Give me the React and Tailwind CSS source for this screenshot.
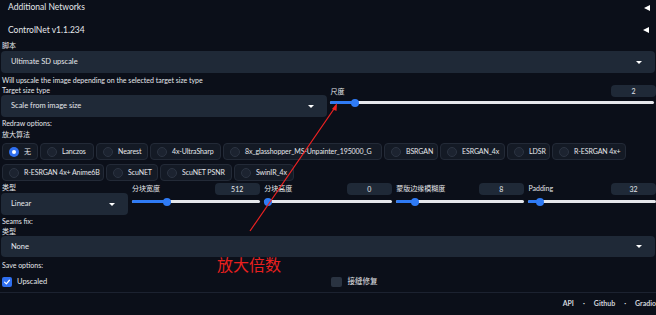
import React from "react";

const row1 = [
    { label: "无", w: "w-[36px]", checked: true },
    { label: "Lanczos", w: "w-[54px]" },
    { label: "Nearest", w: "w-[52px]" },
    { label: "4x-UltraSharp", w: "w-[71px]" },
    { label: "8x_glasshopper_MS-Unpainter_195000_G", w: "w-[159px]" },
    { label: "BSRGAN", w: "w-[54px]" },
    { label: "ESRGAN_4x", w: "w-[65px]" },
    { label: "LDSR", w: "w-[43px]" },
    { label: "R-ESRGAN 4x+", w: "w-[74px]" },
];

const row2 = [
    { label: "R-ESRGAN 4x+ Anime6B", w: "w-[102px]" },
    { label: "ScuNET", w: "w-[52px]" },
    { label: "ScuNET PSNR", w: "w-[72px]" },
    { label: "SwinIR_4x", w: "w-[60px]" },
];

const tiles = [
    { label: "分块宽度", value: "512", fill: "w-[27%]" },
    { label: "分块高度", value: "0", fill: "w-[3%]" },
    { label: "蒙版边缘模糊度", value: "8", fill: "w-[15%]" },
    { label: "Padding", value: "32", fill: "w-[9%]" },
];

function Caret() {
    return <span className="w-0 h-0 border-l-[3px] border-r-[3px] border-t-[3px] border-l-transparent border-r-transparent border-t-white" />;
}

function Dropdown({ text, className = "" }) {
    return (
        <div className={`flex items-center justify-between bg-[#1f2937] rounded-[4px] pl-[10px] pr-[13px] text-[7.5px] text-gray-200 ${className}`}>
            <span>{text}</span>
            <Caret />
        </div>
    );
}

function Slider({ fill }) {
    return (
        <div className="relative h-[3px] rounded-full bg-[#e5e7eb]">
            <div className={`absolute left-0 top-0 h-[3px] rounded-full bg-[#2f7bf5] ${fill}`}>
                <span className="absolute right-[-4px] top-[-2.5px] w-[8px] h-[8px] rounded-full bg-[#2f7bf5]" />
            </div>
        </div>
    );
}

function NumberBox({ value }) {
    return (
        <div className="w-[45px] h-[12px] flex items-center justify-center bg-[#1f2937] rounded-[4px] text-[7px] text-gray-200">
            {value}
        </div>
    );
}

function Radio({ label, w, checked }) {
    return (
        <div className={`${w} h-[17px] flex items-center gap-[5px] pl-[6px] pr-[4px] bg-[#141a25] border border-[#232a37] rounded-[4px] text-[7px] tracking-[-0.1px] text-gray-200 whitespace-nowrap`}>
            {checked ? (
                <span className="shrink-0 w-[10px] h-[10px] rounded-full bg-[#2f6ff0] flex items-center justify-center">
                    <span className="w-[4px] h-[4px] rounded-full bg-white" />
                </span>
            ) : (
                <span className="shrink-0 w-[10px] h-[10px] rounded-full bg-[#1c2330] border border-[#2c3442]" />
            )}
            <span>{label}</span>
        </div>
    );
}

export default function App() {
    return (
        <div
            className="relative w-[656px] h-[315px] overflow-hidden bg-[#0b0f19] text-gray-200"
            style={{ fontFamily: '"Lato", "Noto Sans CJK SC", sans-serif' }}
        >
            {/* accordion headers */}
            <div className="h-[15px] flex items-center justify-between pl-[8px] pr-[6px] text-[8.5px]">
                <span>Additional Networks</span>
                <span className="w-0 h-0 border-t-[3px] border-b-[3px] border-r-[6px] border-t-transparent border-b-transparent border-r-white" />
            </div>
            <div className="mt-[7px] h-[16px] flex items-center justify-between pl-[8px] pr-[7px] text-[8.5px]">
                <span>ControlNet v1.1.234</span>
                <span className="w-0 h-0 border-t-[3px] border-b-[3px] border-r-[6px] border-t-transparent border-b-transparent border-r-white" />
            </div>

            <div className="mt-[2px] h-[10px] flex items-center pl-[2px] text-[7px]">脚本</div>
            <Dropdown text="Ultimate SD upscale" className="mt-[1px] h-[22px] mx-[1px]" />
            <div className="mt-[2px] h-[10px] flex items-center pl-[2px] text-[7px]">
                Will upscale the image depending on the selected target size type
            </div>

            <div className="grid grid-cols-2 gap-[3px]">
                <div className="pl-[1px]">
                    <div className="h-[10px] flex items-center pl-[1px] text-[7px]">Target size type</div>
                    <Dropdown text="Scale from image size" className="h-[22px]" />
                </div>
                <div>
                    <div className="h-[12px] flex items-center justify-between pl-[1px] text-[7px]">
                        <span>尺度</span>
                        <NumberBox value="2" />
                    </div>
                    <div className="mt-[4px] pr-[2px]">
                        <Slider fill="w-[8%]" />
                    </div>
                </div>
            </div>

            <div className="mt-[1px] h-[10px] flex items-center pl-[2px] text-[7px]">Redraw options:</div>
            <div className="mt-[1px] h-[10px] flex items-center pl-[2px] text-[7px]">放大算法</div>

            <div className="mt-[4px] pl-[2px] flex flex-col gap-[4px]">
                <div className="flex gap-[2px]">
                    {row1.map((r) => (
                        <Radio key={r.label} {...r} />
                    ))}
                </div>
                <div className="flex gap-[2px]">
                    {row2.map((r) => (
                        <Radio key={r.label} {...r} />
                    ))}
                </div>
            </div>

            <div className="mt-[1px] grid grid-cols-5 gap-[4.5px]">
                <div className="pl-[1px]">
                    <div className="h-[10px] flex items-center pl-[1px] text-[7px]">类型</div>
                    <Dropdown text="Linear" className="mt-[1px] h-[22px]" />
                </div>
                {tiles.map((t) => (
                    <div key={t.label}>
                        <div className="h-[13px] flex items-end justify-between">
                            <span className="self-center text-[7px]">{t.label}</span>
                            <NumberBox value={t.value} />
                        </div>
                        <div className="mt-[5px]">
                            <Slider fill={t.fill} />
                        </div>
                    </div>
                ))}
            </div>

            <div className="mt-[1px] h-[10px] flex items-center pl-[2px] text-[7px]">Seams fix:</div>
            <div className="h-[10px] flex items-center pl-[2px] text-[7px]">类型</div>
            <Dropdown text="None" className="h-[21px] mx-[1px]" />

            <div className="mt-[3px] h-[10px] flex items-center pl-[2px] text-[7px]">Save options:</div>

            <div className="mt-[6px] h-[11px] grid grid-cols-2 gap-[3px] text-[7.5px]">
                <div className="flex items-center gap-[5px] pl-[2px]">
                    <span className="w-[10px] h-[10px] rounded-[2px] bg-[#2f6ff0] flex items-center justify-center">
                        <svg viewBox="0 0 10 10" className="w-[8px] h-[8px]">
                            <path d="M2 5.2 L4.2 7.3 L8 2.8" fill="none" stroke="white" strokeWidth="1.5" strokeLinecap="round" strokeLinejoin="round" />
                        </svg>
                    </span>
                    <span>Upscaled</span>
                </div>
                <div className="flex items-center gap-[6px] pl-[1px]">
                    <span className="w-[11px] h-[10px] rounded-[2px] bg-[#2a3341]" />
                    <span>接缝修复</span>
                </div>
            </div>

            <div className="mt-[5px] border-t border-[#1c2230]" />

            <div className="h-[20px] flex items-center justify-end gap-[9px] text-[7px] font-bold text-gray-300">
                <span>API</span>
                <span>·</span>
                <span>Github</span>
                <span>·</span>
                <span>Gradio</span>
            </div>

            {/* red annotation */}
            <svg className="absolute left-0 top-0 w-[656px] h-[315px] pointer-events-none" viewBox="0 0 656 315">
                <line x1="250" y1="231" x2="336" y2="106" stroke="#ee2222" strokeWidth="1.2" />
                <polygon points="332,109 337,103 336.5,111" fill="#ee2222" />
            </svg>
            <div className="absolute left-[217px] top-[257px] text-[16px] leading-none text-[#e8201f]">放大倍数</div>
        </div>
    );
}
